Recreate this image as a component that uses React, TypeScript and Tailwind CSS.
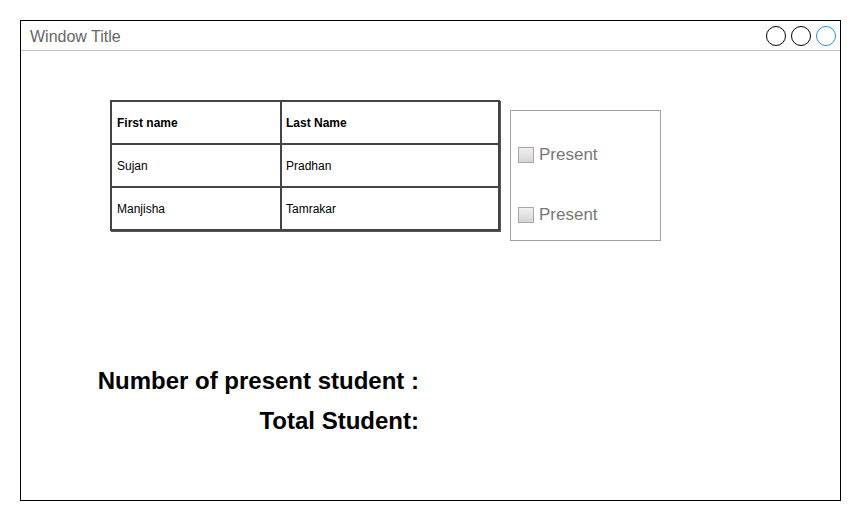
const rows = [
  { first: 'Sujan', last: 'Pradhan' },
  { first: 'Manjisha', last: 'Tamrakar' },
]

function Checkbox({ label }: { label: string }) {
  return (
    <div className="flex items-center gap-[5px]">
      <span className="w-[16px] h-[16px] border border-[#a8a8a8] bg-gradient-to-b from-[#f0f0f0] to-[#d6d6d6]" />
      <span className="text-[17px] text-[#777] leading-none">{label}</span>
    </div>
  )
}

export default function App() {
  return (
    <div className="w-[861px] h-[521px] bg-white pt-[20px] pl-[20px] font-['Liberation_Sans',Arial,sans-serif]">
      <div className="w-[821px] h-[481px] border border-black flex flex-col">
        {/* Title bar */}
        <div className="h-[30px] shrink-0 border-b border-[#c4c4c4] flex items-center justify-between pl-[9px] pr-[4px]">
          <span className="text-[16px] text-[#666] mt-[2px]">Window Title</span>
          <div className="flex gap-[5px] mt-[1px]">
            <span className="w-[20px] h-[20px] rounded-full border border-black" />
            <span className="w-[20px] h-[20px] rounded-full border border-black" />
            <span className="w-[20px] h-[20px] rounded-full border border-[#1e90ff]" />
          </div>
        </div>

        {/* Content */}
        <div className="flex flex-col">
          <div className="flex items-start mt-[49px] ml-[89px]">
            <table className="border-collapse border-2 border-[#333] shadow-[1px_1px_0_#555] text-[12px] text-black">
              <tbody>
                <tr className="h-[43px]">
                  <th className="w-[170px] border-2 border-[#444] text-left font-bold px-[5px]">First name</th>
                  <th className="w-[218px] border-2 border-[#444] text-left font-bold px-[4px]">Last Name</th>
                </tr>
                {rows.map(r => (
                  <tr key={r.first} className="h-[43px]">
                    <td className="border-2 border-[#444] px-[5px]">{r.first}</td>
                    <td className="border-2 border-[#444] px-[4px]">{r.last}</td>
                  </tr>
                ))}
              </tbody>
            </table>

            <div className="ml-[10px] mt-[10px] w-[151px] h-[131px] border border-[#a0a0a0] flex flex-col gap-[43px] pt-[35px] pl-[7px]">
              <Checkbox label="Present" />
              <Checkbox label="Present" />
            </div>
          </div>

          <div className="mt-[120px] ml-[76px] w-[322px] flex flex-col items-end text-[24px] font-bold text-black leading-[40px] whitespace-nowrap">
            <span>Number of present student :</span>
            <span>Total Student:</span>
          </div>
        </div>
      </div>
    </div>
  )
}
